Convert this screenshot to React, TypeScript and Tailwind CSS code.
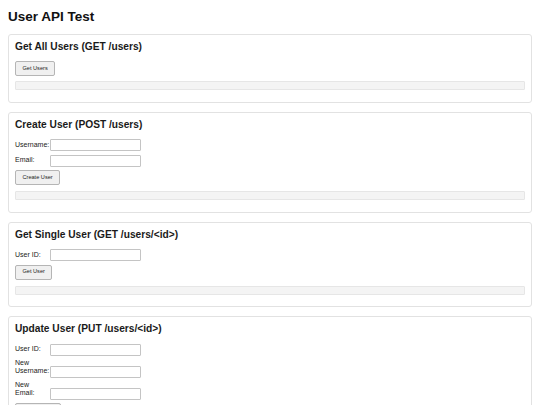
// Página de prueba para la API de usuarios
import { useState } from "react";

interface Field {
  label: string;
  key: string;
}

interface Section {
  title: string;
  button: string;
  fields: Field[];
}

const sections: Section[] = [
  { title: "Get All Users (GET /users)", button: "Get Users", fields: [] },
  {
    title: "Create User (POST /users)",
    button: "Create User",
    fields: [
      { label: "Username:", key: "username" },
      { label: "Email:", key: "email" },
    ],
  },
  {
    title: "Get Single User (GET /users/<id>)",
    button: "Get User",
    fields: [{ label: "User ID:", key: "id" }],
  },
  {
    title: "Update User (PUT /users/<id>)",
    button: "Update User",
    fields: [
      { label: "User ID:", key: "id" },
      { label: "New Username:", key: "username" },
      { label: "New Email:", key: "email" },
    ],
  },
  {
    title: "Delete User (DELETE /users/<id>)",
    button: "Delete User",
    fields: [{ label: "User ID:", key: "id" }],
  },
];

function ApiCard({ section }: { section: Section }) {
  const [values, setValues] = useState<Record<string, string>>({});
  const [result, setResult] = useState("");
  const hasFields = section.fields.length > 0;

  return (
    <div className="bg-white border border-[#e2e2e2] rounded-[3px] p-[6px] text-[7px] leading-[8px]">
      <h3 className="text-[10.2px] leading-[12px] font-bold text-[#1a1a1a] mb-[8.5px]">
        {section.title}
      </h3>
      {section.fields.map((field) => (
        <div key={field.key} className="flex items-end mb-[3.5px]">
          <label className="w-[35px] shrink-0 text-[7px] leading-[8px] text-[#222] pb-[2.5px]">
            {field.label}
          </label>
          <input
            type="text"
            className="block w-[91px] h-[12px] border border-[#c4c4c4] rounded-[1px] bg-white text-[7px] px-[2px] outline-none"
            value={values[field.key] ?? ""}
            onChange={(e) => setValues({ ...values, [field.key]: e.target.value })}
          />
        </div>
      ))}
      <button
        className={`block h-[15px] px-[6.5px] border border-[#b5b5b5] rounded-[2px] bg-[#f0f0f0] text-[5.6px] leading-none text-[#222] ${
          hasFields ? "mt-[1px]" : ""
        }`}
        onClick={() => setResult("")}
      >
        {section.button}
      </button>
      <pre
        className={`mb-[5.5px] h-[9px] bg-[#f4f4f4] border border-[#e6e6e6] rounded-[1px] text-[6px] leading-[7px] px-[2px] ${
          hasFields ? "mt-[6px]" : "mt-[5px]"
        }`}
      >
        {result}
      </pre>
    </div>
  );
}

export default function App() {
  return (
    <div
      className="bg-white min-h-screen px-[8px] pt-[8.5px] pb-[8px]"
      style={{ fontFamily: '"Liberation Sans", Arial, sans-serif' }}
    >
      <h1 className="text-[13.5px] leading-[16px] font-bold text-[#111] mb-[9px]">User API Test</h1>
      <div className="flex flex-col gap-[9px]">
        {sections.map((s) => (
          <ApiCard key={s.title} section={s} />
        ))}
      </div>
    </div>
  );
}
